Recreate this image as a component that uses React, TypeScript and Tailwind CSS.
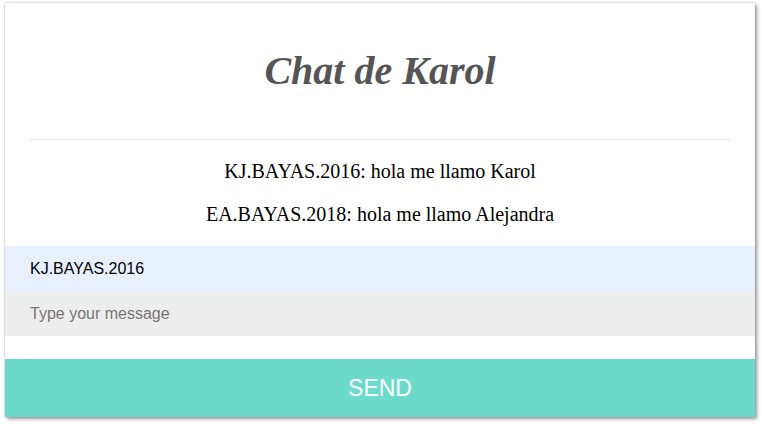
import React from 'react';

const messages = [
  { user: 'KJ.BAYAS.2016', text: 'hola me llamo Karol' },
  { user: 'EA.BAYAS.2018', text: 'hola me llamo Alejandra' },
];

export default function App() {
  return (
    <div className="min-h-[426px] bg-white pl-[5px] pt-[3px]">
      <div className="w-[750px] bg-white shadow-[2px_2px_4px_rgba(0,0,0,0.4),0_0_2px_rgba(0,0,0,0.25)]">
        {/* Header */}
        <div className="flex h-[136px] items-center justify-center">
          <h1 className="font-['Liberation_Serif',serif] text-[40px] font-bold italic text-[#555555]">
            Chat de Karol
          </h1>
        </div>
        <div className="mx-[25px] h-px bg-[#e6e6e6]" />

        {/* Messages */}
        <div className="py-[10px] font-['Liberation_Serif',serif] text-[20px] text-black">
          {messages.map((m) => (
            <p key={m.user} className="h-[43px] text-center leading-[43px]">
              {m.user}: {m.text}
            </p>
          ))}
        </div>

        {/* Form */}
        <form className="flex flex-col font-['Liberation_Sans',sans-serif]">
          <input
            type="text"
            defaultValue="KJ.BAYAS.2016"
            className="h-[45px] bg-[#e8f0fe] px-[25px] text-[16px] text-black outline-none"
          />
          <input
            type="text"
            placeholder="Type your message"
            className="h-[45px] bg-[#ededed] px-[25px] text-[16px] text-black outline-none placeholder:text-[#757575]"
          />
          <button
            type="button"
            className="mt-[23px] h-[58px] bg-[#6bdacb] text-[23px] text-white"
          >
            SEND
          </button>
        </form>
      </div>
    </div>
  );
}
